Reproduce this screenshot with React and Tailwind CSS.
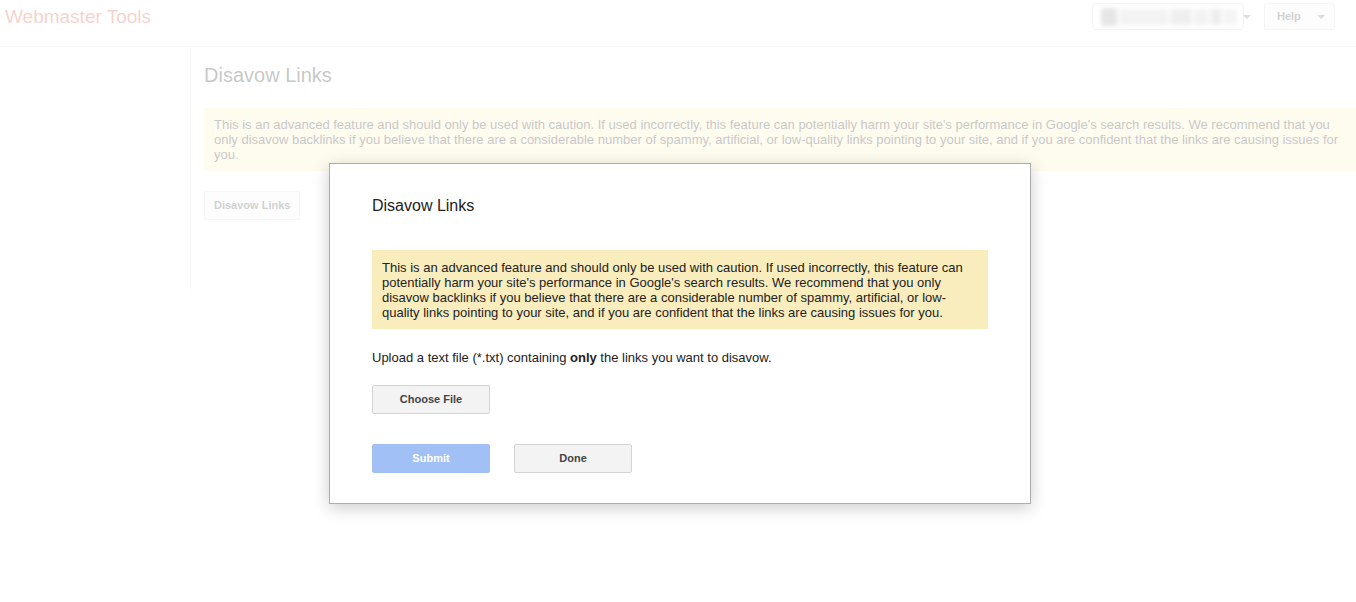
import React from 'react';

const font = { fontFamily: '"Liberation Sans", Arial, sans-serif' };

function Arrow() {
    return <span className="inline-block w-0 h-0 border-x-[4px] border-x-transparent border-t-[4px] border-t-[#777]" />;
}

export default function App() {
    return (
        <div className="relative w-[1356px] h-[602px] bg-white overflow-hidden" style={font}>
            {/* page behind the dialog */}
            <header className="h-[47px] border-b border-[#e5e5e5] flex items-start justify-between">
                <div className="pl-[5px] pt-[5px] text-[19px] text-[#dd4b39] leading-[24px]">Webmaster Tools</div>
                <div className="flex items-center gap-[20px] pt-[3px] pr-[21px]">
                    <div className="w-[152px] h-[27px] border border-[#d8d8d8] rounded-[2px] flex items-center px-[8px] gap-[6px]">
                        <div className="flex-1 h-[18px] flex items-center gap-[2px] blur-[2px]">
                            <div className="w-[16px] h-[18px] bg-[#9a9a9a]" />
                            <div className="w-[50px] h-[16px] bg-[#d0d0d0]" />
                            <div className="w-[20px] h-[16px] bg-[#bdbdbd]" />
                            <div className="w-[16px] h-[16px] bg-[#d0d0d0]" />
                            <div className="w-[10px] h-[16px] bg-[#b8b8b8]" />
                            <div className="w-[14px] h-[16px] bg-[#d6d6d6]" />
                        </div>
                        <Arrow />
                    </div>
                    <div className="w-[71px] h-[27px] border border-[#dcdcdc] rounded-[2px] bg-[#f5f5f5] flex items-center justify-between pl-[12px] pr-[9px]">
                        <span className="text-[11px] font-bold text-[#444]">Help</span>
                        <Arrow />
                    </div>
                </div>
            </header>
            <div className="flex">
                <aside className="w-[191px] h-[243px] border-r border-[#ebebeb] shrink-0" />
                <main className="flex-1 pl-[13px] pt-[15px]">
                    <h1 className="text-[20px] leading-[26px] text-[#222]">Disavow Links</h1>
                    <div className="mt-[20px] bg-[#f9edbe] px-[10px] pt-[9px] pb-[9px] text-[13px] leading-[15px] text-[#222]">
                        This is an advanced feature and should only be used with caution. If used incorrectly, this feature can potentially harm your site's performance in Google's search results. We recommend that you only disavow backlinks if you believe that there are a considerable number of spammy, artificial, or low-quality links pointing to your site, and if you are confident that the links are causing issues for you.
                    </div>
                    <button className="mt-[20px] h-[29px] px-[9px] border border-[#d9d9d9] rounded-[2px] bg-[#f5f5f5] text-[11px] font-bold text-[#444]">
                        Disavow Links
                    </button>
                </main>
            </div>

            {/* dim layer */}
            <div className="absolute inset-0 bg-white/75" />

            {/* dialog */}
            <div className="absolute left-[329px] top-[163px] w-[702px] h-[341px] bg-white border border-[#acacac] shadow-[0_4px_16px_rgba(0,0,0,0.2)] px-[42px] pt-[32px]">
                <h2 className="text-[16px] leading-[20px] text-[#222]">Disavow Links</h2>
                <div className="mt-[34px] w-[616px] bg-[#f9edbe] px-[10px] pt-[10px] pb-[9px] text-[13px] leading-[15px] text-[#222]">
                    This is an advanced feature and should only be used with caution. If used incorrectly, this feature can potentially harm your site's performance in Google's search results. We recommend that you only disavow backlinks if you believe that there are a considerable number of spammy, artificial, or low-quality links pointing to your site, and if you are confident that the links are causing issues for you.
                </div>
                <p className="mt-[21px] text-[13px] leading-[15px] text-[#222]">
                    Upload a text file (*.txt) containing <b>only</b> the links you want to disavow.
                </p>
                <button className="mt-[20px] w-[118px] h-[29px] border border-[#d4d4d4] rounded-[2px] bg-[#f3f3f3] text-[11px] font-bold text-[#444] block">
                    Choose File
                </button>
                <div className="mt-[30px] flex gap-[24px]">
                    <button className="w-[118px] h-[29px] border border-[#9fbff3] rounded-[2px] bg-[#a0c0f6] text-[11px] font-bold text-white">
                        Submit
                    </button>
                    <button className="w-[118px] h-[29px] border border-[#d4d4d4] rounded-[2px] bg-[#f3f3f3] text-[11px] font-bold text-[#444]">
                        Done
                    </button>
                </div>
            </div>
        </div>
    );
}
